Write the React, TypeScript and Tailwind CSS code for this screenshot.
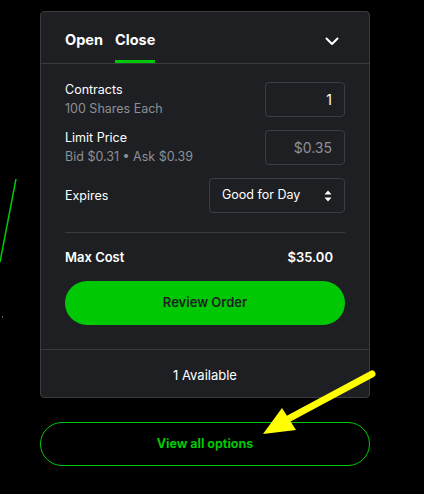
import React from 'react';

const Field = ({ value, muted }: { value: string; muted?: boolean }) => (
  <div
    className={`w-20 h-[35px] rounded border border-[#3b3d42] flex items-center justify-end pr-3 text-[14px] ${
      muted ? 'text-[#8c9097]' : 'text-white'
    }`}
  >
    {value}
  </div>
);

const App = () => {
  return (
    <div
      className="relative w-[424px] h-[494px] bg-black overflow-hidden"
      style={{ fontFamily: 'Inter, "Noto Sans", sans-serif' }}
    >
      {/* chart line on the left */}
      <svg className="absolute left-0 top-0" width="30" height="330">
        <path d="M16 179 L0 262" stroke="#00c805" strokeWidth="1.5" fill="none" />
        <rect x="2" y="316" width="1" height="2" fill="#555" />
      </svg>

      <div className="pt-[11px] pl-10">
        {/* order card */}
        <div className="w-[330px] rounded border border-[#3a3b3f] bg-[#1e1f23] text-white">
          <div className="h-[52px] flex items-end justify-between px-6 border-b border-[#3a3b3f]">
            <div className="flex gap-3 text-[14.5px] font-bold">
              <div className="pb-[9px] border-b-[3px] border-transparent">Open</div>
              <div className="pb-[9px] border-b-[3px] border-[#00c805]">Close</div>
            </div>
            <svg className="mb-[17px] mr-[6px]" width="14" height="9" viewBox="0 0 14 9">
              <path d="M1.5 1.5 L7 7 L12.5 1.5" stroke="white" strokeWidth="2" fill="none" strokeLinecap="round" strokeLinejoin="round" />
            </svg>
          </div>

          <div className="px-6 pt-[18px]">
            <div className="flex flex-col gap-[13px]">
              <div className="flex items-center justify-between">
                <div className="flex flex-col gap-[3px]">
                  <span className="text-[12.5px] leading-4">Contracts</span>
                  <span className="text-[12.5px] leading-4 text-[#8c9097]">100 Shares Each</span>
                </div>
                <Field value="1" />
              </div>
              <div className="flex items-center justify-between">
                <div className="flex flex-col gap-[3px]">
                  <span className="text-[12.5px] leading-4">Limit Price</span>
                  <span className="text-[12.5px] leading-4 text-[#8c9097]">Bid $0.31 • Ask $0.39</span>
                </div>
                <Field value="$0.35" muted />
              </div>
              <div className="flex items-center justify-between">
                <span className="text-[12.5px] pt-[2px]">Expires</span>
                <div className="w-[136px] h-[35px] rounded border border-[#3b3d42] flex items-center justify-between pl-3 pr-3 text-[12.5px]">
                  <span>Good for Day</span>
                  <svg width="8" height="12" viewBox="0 0 8 12">
                    <path d="M4 0.5 L7.5 4.5 L0.5 4.5 Z" fill="white" />
                    <path d="M4 11.5 L7.5 7.5 L0.5 7.5 Z" fill="white" />
                  </svg>
                </div>
              </div>
            </div>

            <div className="mt-[19px] border-t border-[#3a3b3f]" />

            <div className="flex items-center justify-between pr-3 pt-[2px] h-[48px] text-[13px] font-semibold">
              <span>Max Cost</span>
              <span>$35.00</span>
            </div>

            <button className="w-full h-[44px] rounded-full bg-[#00c805] text-[#1e1f23] text-[13px] font-semibold">
              Review Order
            </button>
            <div className="h-6" />
          </div>

          <div className="h-[48px] pt-1 border-t border-[#3a3b3f] flex items-center justify-center text-[13px]">
            1 Available
          </div>
        </div>

        <button className="mt-[24px] w-[330px] h-[44px] rounded-full border border-[#00c805] text-[#00c805] text-[12.5px] font-bold">
          View all options
        </button>
      </div>

      {/* yellow annotation arrow */}
      <svg className="absolute left-0 top-0 pointer-events-none" width="424" height="494">
        <line x1="372" y1="374" x2="288" y2="419" stroke="#ffff00" strokeWidth="7" strokeLinecap="round" />
        <polygon points="263,434 282,408 296,430" fill="#ffff00" />
      </svg>
    </div>
  );
};

export default App;
